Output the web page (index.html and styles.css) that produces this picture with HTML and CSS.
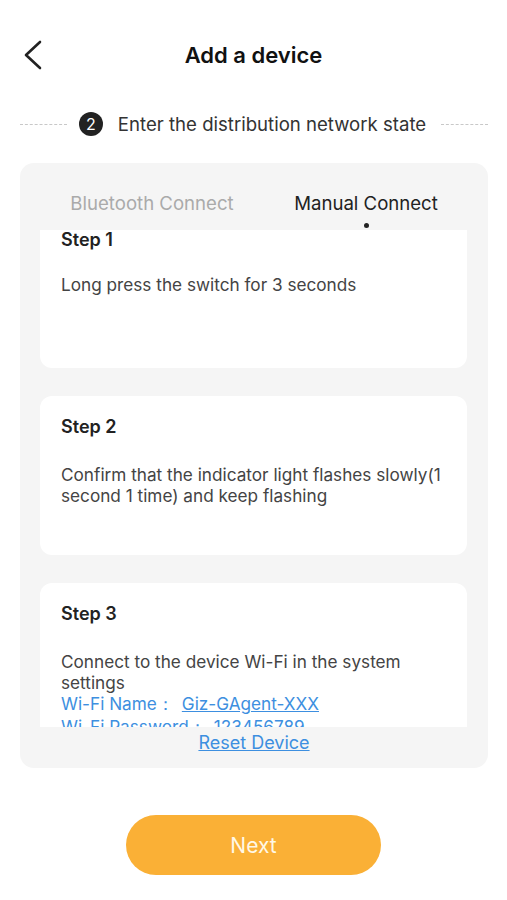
FILE: index.html
```html
<!DOCTYPE html>
<html lang="en">
<head>
    <meta charset="UTF-8">
    <meta name="viewport" content="width=device-width, initial-scale=1.0">
    <title>Add a device</title>
    <link rel="stylesheet" href="styles.css">
</head>
<body>
    <header class="nav">
        <button class="back" title="Back">
            <svg width="20" height="30" viewBox="0 0 20 30"><path d="M17 2 L3 15 L17 28" fill="none" stroke="#222" stroke-width="2.6" stroke-linecap="round" stroke-linejoin="round"/></svg>
        </button>
        <h1>Add a device</h1>
        <span></span>
    </header>

    <div class="step-row">
        <span class="dash"></span>
        <span class="step-num">2</span>
        <span class="step-title">Enter the distribution network state</span>
        <span class="dash"></span>
    </div>

    <section class="panel">
        <div class="tabs">
            <div class="tab">Bluetooth Connect</div>
            <div class="tab active">Manual Connect</div>
        </div>

        <div class="steps">
            <div class="steps-inner">
                <div class="card">
                    <h3>Step 1</h3>
                    <p class="first">Long press the switch for 3 seconds</p>
                </div>
                <div class="card">
                    <h3>Step 2</h3>
                    <p>Confirm that the indicator light flashes slowly(1 second 1 time) and keep flashing</p>
                </div>
                <div class="card">
                    <h3>Step 3</h3>
                    <p>Connect to the device Wi-Fi in the system settings</p>
                    <p class="wifi">Wi-Fi Name：<a href="#">Giz-GAgent-XXX</a></p>
                    <p class="wifi">Wi-Fi Password：<a href="#">123456789</a></p>
                </div>
            </div>
        </div>

        <div class="reset"><a href="#">Reset Device</a></div>
    </section>

    <div class="footer">
        <button class="next">Next</button>
    </div>
</body>
</html>
```

FILE: styles.css
```css
/* Pantalla de añadir dispositivo */
body { font-family: Inter, "Liberation Sans", Arial, sans-serif; margin: 0; background-color: #fff; color: #333; width: 507px; }
button { font-family: inherit; border: none; background: none; padding: 0; cursor: pointer; }

.nav { display: grid; grid-template-columns: 60px 1fr 60px; align-items: center; height: 50px; margin-top: 30px; }
.back { display: flex; align-items: center; justify-content: flex-start; padding-left: 23px; height: 50px; }
.nav h1 { margin: 0; text-align: center; font-size: 22px; font-weight: 600; color: #111; }

.step-row { display: flex; align-items: center; gap: 12px; padding: 0 19px 0 20px; margin-top: 32px; height: 24px; }
.dash { flex: 1; border-top: 1px dashed #c8c8c8; }
.step-num { width: 24px; height: 24px; border-radius: 50%; background-color: #222; color: #fff; font-size: 16px; display: flex; align-items: center; justify-content: center; }
.step-title { font-size: 18.6px; color: #333; margin: 0 3px; }

.panel { margin: 27px 19px 0 20px; height: 605px; background-color: #f5f5f5; border-radius: 14px; display: flex; flex-direction: column; }
.tabs { display: grid; grid-template-columns: 1fr 1fr; padding: 28px 15px 0 25px; }
.tab { text-align: center; font-size: 18.6px; line-height: 24px; color: #aaa; height: 39px; }
.tab.active { color: #222; position: relative; }
.tab.active::after { content: ""; position: absolute; left: 50%; top: 32px; width: 5px; height: 5px; margin-left: -2.5px; border-radius: 50%; background-color: #222; }

.steps { margin: 0 21px 0 20px; height: 497px; overflow: hidden; }
.steps-inner { display: flex; flex-direction: column; gap: 28px; margin-top: -21px; }
.card { background-color: #fff; border-radius: 12px; height: 159px; padding: 19px 21px 0; box-sizing: border-box; }
.card h3 { margin: 0; font-size: 18px; line-height: 24px; font-weight: 600; color: #222; }
.card p { margin: 0; font-size: 17.2px; line-height: 21px; color: #444; }
.card h3 + p { margin-top: 25px; }
.card h3 + p.first { margin-top: 22px; }
.card p.wifi { color: #3d8fe0; line-height: 22px; }
.card p.wifi:last-child { margin-top: 1px; }
.card p.wifi a { color: #3d8fe0; margin-left: 8px; }

.reset { text-align: center; padding-top: 5px; font-size: 18px; line-height: 22px; }
.reset a { color: #3d8fe0; }

.footer { display: flex; justify-content: center; margin-top: 47px; }
.next { width: 255px; height: 60px; border-radius: 30px; background-color: #fab036; color: #fff8e6; font-size: 21px; }
```
